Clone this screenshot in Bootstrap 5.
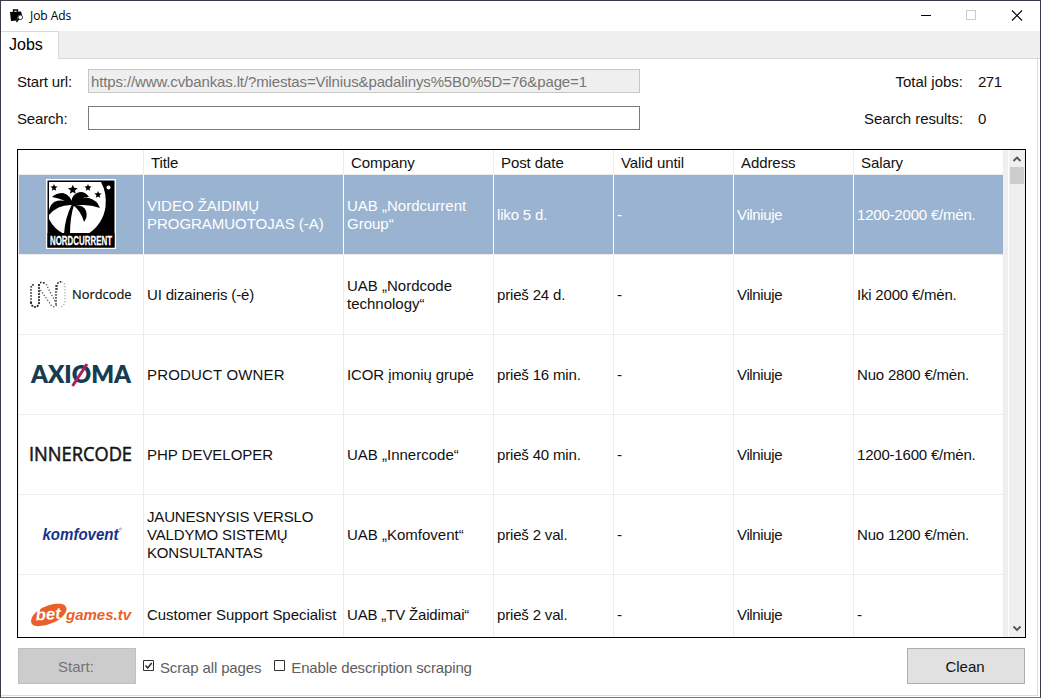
<!DOCTYPE html>
<html lang="lt">
<head>
<meta charset="utf-8">
<title>Job Ads</title>
<link rel="stylesheet" href="https://cdn.jsdelivr.net/npm/bootstrap@5.3.0/dist/css/bootstrap.min.css">
<style>
*{border-radius:0!important}
body{width:1041px;height:698px;overflow:hidden;background:#fff;color:#111;font:15px/18px "Liberation Sans",Arial,sans-serif}
.win{height:698px;border:1px solid #3b3a48;border-bottom-color:#77767e}
.titlebar{height:30px;font:12px/30px "Open Sans","Noto Sans",sans-serif;letter-spacing:-.05px;color:#000;padding-left:8px}
.tabstrip{height:28px;background:#efefef;border-bottom:1px solid #d9d9d9}
.tabstrip .nav-link{height:28px;width:58px;padding:4px 0 0 8px;background:#fff;border:0;border-right:1px solid #d9d9d9;border-top:1px solid #d9d9d9;color:#000;font-size:16px;line-height:18px}
.page{height:637px;border-right:1px solid #dcdcdc;border-bottom:1px solid #dcdcdc;margin-right:2px;padding:10px 11px 0 16px}
.fields{height:80px}
.line{height:24px;margin-bottom:13px;width:1009px}
.line>label,.line>span{padding-top:2px}
.line label{width:71px;letter-spacing:-.18px}
.line .form-control{width:552px;height:24px;padding:0 2px;border:1px solid #7a7a7a;font:inherit;color:#111;box-shadow:none;letter-spacing:-.13px}
.line .form-control:disabled{background:#efefef;border-color:#c6c6c6;color:#767676}
.stat{width:109px;text-align:right;white-space:nowrap}
.amount{width:63px;padding-left:15px;letter-spacing:-.5px}
.jobs{width:1009px;height:489px;border:1px solid #000;overflow:hidden}
.gridrow{display:grid;grid-template-columns:126px 200px 150px 120px 120px 120px 150px;height:80px;width:986px}
.gridrow>div{border-right:1px solid #ececec;border-bottom:1px solid #ececec;display:flex;align-items:center;padding:1px 0 0 3px;white-space:pre}
.gridrow>div:nth-child(2){letter-spacing:-.03px}
.gridrow>div:nth-child(4){letter-spacing:-.17px}
.gridrow>div:nth-child(6){letter-spacing:-.35px}
.gridrow>div:nth-child(7){letter-spacing:-.2px}
.gridrow>div:first-child{justify-content:center;padding:0;border-left:1px solid #ececec}
.gridrow.head{height:25px}
.gridrow.head>div{padding:1px 0 0 7px;letter-spacing:-.08px}
.gridrow.picked{background:#9ab3d0;color:#fff}
.gridrow.picked>div{border-right-color:#fff}
.gridrow.picked>div:last-child{border-right-color:#efefef}
.gridrow>div.snug:nth-child(n){letter-spacing:-.17px}
.gridrow>div.airy:nth-child(n){letter-spacing:.17px}
.gutter{width:5px;background:#efefef}
.rail{width:16px;background:#efefef;margin-left:1px}
.thumb{height:17px;background:#cdcdcd;margin:0 1px}
.foot{width:1007px;margin:10px 0 0 1px;color:#5e5e5e;letter-spacing:-.14px}
.foot .btn{width:118px;height:36px;font:inherit;padding:2px 2px 0 0;background:#e1e1e1;border:1px solid #adadad;color:#111}
.foot .btn:disabled{background:#ccc;border-color:#bfbfbf;color:#747474;opacity:1}
svg{overflow:visible}
</style>
<script src="https://cdn.jsdelivr.net/npm/bootstrap@5.3.0/dist/js/bootstrap.bundle.min.js"></script>
</head>
<body>
<div class="win">
 <header class="titlebar d-flex align-items-center">
  <svg width="16" height="14" viewBox="0 0 16 14"><path d="M4.500 3V1h4v2" fill="none" stroke="#000" stroke-width="1.300"/><path d="M1 3l11-.5 1 3.500-4 1-.5 3 .5 1.500L2 12z"/><circle cx="11.300" cy="8.300" r="2.300" fill="#fff" stroke="#333"/><path d="M9.700 10L7.500 13" stroke="#000" stroke-width="1.300"/></svg>
  <span style="padding-left:5px">Job Ads</span>
  <svg class="ms-auto" width="140" height="30" fill="none"><path d="M21 14.500h10" stroke="#000"/><rect x="66.500" y="9.500" width="9" height="9" stroke="#ccc"/><path d="M112 9.500l10 10M122 9.500l-10 10" stroke="#000" stroke-width="1.100"/></svg>
 </header>
 <nav class="nav tabstrip"><a class="nav-link">Jobs</a></nav>
 <main class="page">
  <div class="fields">
   <div class="line d-flex align-items-center"><label>Start url:</label><input class="form-control" disabled value="https://www.cvbankas.lt/?miestas=Vilnius&amp;padalinys%5B0%5D=76&amp;page=1"><span class="stat ms-auto">Total jobs:</span><span class="amount">271</span></div>
   <div class="line d-flex align-items-center"><label>Search:</label><input class="form-control"><span class="stat ms-auto" style="letter-spacing:-.07px">Search results:</span><span class="amount">0</span></div>
  </div>
  <section class="jobs d-flex">
   <div>
    <div class="gridrow head"><div></div><div>Title</div><div>Company</div><div>Post date</div><div>Valid until</div><div>Address</div><div>Salary</div></div>
    <div class="gridrow picked"><div>
     <svg width="70" height="70" viewBox="0 0 70 70" style="margin-top:-1px"><path fill="#fff" d="M0 0h70v70H0z"/><path d="M1.500 1.500h67v67h-67z"/><path fill="#fff" d="M3 3h52Q61 14 59.500 28 57 45 42 55H18Q8 50 3 40z"/>
      <path id="st" d="M8 5l1 2.300 2.600.2-2 1.700.6 2.500L8 10.400l-2.200 1.300.6-2.500-2-1.700L7 7.300z"/><use href="#st" transform="translate(34 0)"/><use href="#st" transform="translate(44 7)"/><use href="#st" transform="translate(16 -1) scale(1.350)"/>
      <circle cx="62.500" cy="8.500" r="2" fill="#fff"/>
      <path d="M27 26Q17 20 6 18q4-4 11-4 8 2 10 12zM27 26Q12 25 3 36 2 28 8 23q10-4 19 3zM26 27Q24 17 31 14q7-3 12 4-9 0-17 9zM26 27Q34 17 43 19q8 2 11 10-13-5-28-2zM27 26q12 0 13 6 2 6-2 11-3-11-11-17zM26 25l2 1q-4 12-4 29h-6q1-16 8-30z"/><path d="M1.500 54h67v14.500h-67z"/>
      <text x="4" y="66" fill="#fff" stroke="#fff" stroke-width=".3" font-family="Liberation Sans" font-weight="700" font-size="13" textLength="62" lengthAdjust="spacingAndGlyphs">NORDCURRENT</text></svg>
    </div><div>VIDEO ŽAIDIMŲ
PROGRAMUOTOJAS (-A)</div><div>UAB „Nordcurrent
Group“</div><div>liko 5 d.</div><div>-</div><div>Vilniuje</div><div>1200-2000 €/mėn.</div></div>
    <div class="gridrow"><div>
     <svg width="102" height="30" viewBox="0 0 102 30"><g fill="none" stroke="#222" stroke-width="1.700" stroke-linecap="round" stroke-dasharray=".1 2.900"><path stroke-width="2.100" d="M9 5v18q-1 4-4 4t-4-4"/><path d="M1 22V8q0-4 5-3M9 5q1-4 5-2M26 24V5"/><path stroke="#555" stroke-width="1.400" d="M14 3q3 1 4 5l8 15M9 8l12 17q4 4 6-1"/><path d="M27 9V5q1-4 5-3"/><path stroke="#999" stroke-width="1.300" d="M32 2q3 1 3 4v16q-1 4-5 5"/></g><text x="42" y="18.500" fill="#111" stroke="#111" stroke-width=".2" font-family="Open Sans" font-size="12.500" textLength="59.500" lengthAdjust="spacingAndGlyphs">Nordcode</text></svg>
    </div><div class="snug">UI dizaineris (-ė)</div><div>UAB „Nordcode
technology“</div><div>prieš 24 d.</div><div>-</div><div>Vilniuje</div><div>Iki 2000 €/mėn.</div></div>
    <div class="gridrow"><div>
     <svg width="102" height="28" viewBox="0 0 102 28"><text x="1" y="22" fill="#173c52" font-family="Lato" font-weight="800" font-size="24" textLength="100" lengthAdjust="spacingAndGlyphs">AXIOMA</text><path d="M42.500 25L57 3" stroke="#a8235d" stroke-width="3"/></svg>
    </div><div class="airy">PRODUCT OWNER</div><div class="snug" style="letter-spacing:-.1px">ICOR įmonių grupė</div><div>prieš 16 min.</div><div>-</div><div>Vilniuje</div><div>Nuo 2800 €/mėn.</div></div>
    <div class="gridrow"><div>
     <svg width="102" height="28" viewBox="0 0 102 28"><text x="-1" y="20" fill="#161616" stroke="#161616" stroke-width=".55" font-family="Open Sans" font-size="20.500" textLength="103" lengthAdjust="spacingAndGlyphs">INNERCODE</text></svg>
    </div><div>PHP DEVELOPER</div><div>UAB „Innercode“</div><div>prieš 40 min.</div><div>-</div><div>Vilniuje</div><div>1200-1600 €/mėn.</div></div>
    <div class="gridrow"><div>
     <svg width="80" height="26" viewBox="0 0 80 26"><text x="1.500" y="18" fill="#17328b" font-family="Liberation Sans" font-style="italic" font-weight="700" font-size="16" textLength="76" lengthAdjust="spacingAndGlyphs">komfovent</text><circle cx="79.500" cy="7" r="1" fill="none" stroke="#6475b5" stroke-width=".6"/></svg>
    </div><div class="snug">JAUNESNYSIS VERSLO
VALDYMO SISTEMŲ
KONSULTANTAS</div><div>UAB „Komfovent“</div><div>prieš 2 val.</div><div>-</div><div>Vilniuje</div><div>Nuo 1200 €/mėn.</div></div>
    <div class="gridrow"><div>
     <svg width="102" height="28" viewBox="0 0 102 28"><path fill="#ea602b" d="M1 20C2 9 21 1 32 3q8 3 2 11Q27 23 10 25q-9 1-9-5z"/><text transform="rotate(-4 5 19)" x="6" y="19.500" fill="#fff" font-family="Liberation Sans" font-style="italic" font-weight="700" font-size="16" textLength="25" lengthAdjust="spacingAndGlyphs">bet</text><text x="36" y="19" fill="#ea602b" font-family="Liberation Sans" font-style="italic" font-weight="700" font-size="15.500" textLength="65" lengthAdjust="spacingAndGlyphs">games.tv</text></svg>
    </div><div>Customer Support Specialist</div><div class="snug">UAB „TV Žaidimai“</div><div>prieš 2 val.</div><div>-</div><div>Vilniuje</div><div>-</div></div>
   </div>
   <div class="gutter"></div>
   <div class="rail d-flex flex-column"><svg width="16" height="17" fill="none"><path d="M4.500 11L8 7.500l3.500 3.500" stroke="#555" stroke-width="1.800"/></svg><div class="thumb"></div><svg class="mt-auto" width="16" height="17" fill="none"><path d="M4.500 6.500L8 10l3.500-3.500" stroke="#555" stroke-width="1.800"/></svg></div>
  </section>
  <div class="foot d-flex align-items-center">
   <button class="btn" disabled>Start:</button>
   <svg class="flex-shrink-0" style="margin-left:7px" width="12" height="12" fill="none" stroke="#333"><path d="M.5.5h10v10H.5z"/><path d="M2.500 5.500L4.700 8l4-5" stroke-width="1.600"/></svg><span style="padding:3px 0 0 5px">Scrap all pages</span>
   <svg class="flex-shrink-0" style="margin-left:13px" width="12" height="12" fill="none" stroke="#333"><path d="M.5.5h10v10H.5z"/></svg><span style="padding:3px 0 0 5px">Enable description scraping</span>
   <button class="btn ms-auto">Clean</button>
  </div>
 </main>
</div>
</body>
</html>
